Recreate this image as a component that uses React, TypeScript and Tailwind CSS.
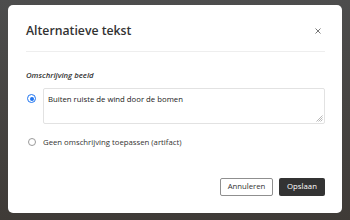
import React from 'react';

export default function App() {
  return (
    <div
      className="w-[350px] h-[220px] bg-gradient-to-b from-[#4d4d4d] to-[#3f3b37] pl-[8px] pt-[5px] overflow-hidden"
      style={{ fontFamily: '"Open Sans", sans-serif' }}
    >
      <div className="w-[334px] h-[208px] bg-white rounded-[5px] pl-[18px] pr-[17px] flex flex-col">
        {/* Header */}
        <div className="flex items-center justify-between h-[47px] border-b border-[#eeeeee]">
          <h2 className="text-[12.25px] font-semibold text-[#333333] leading-none pt-[6px]">
            Alternatieve tekst
          </h2>
          <button type="button" className="text-[#777777] leading-none mr-[4px] pt-[5px]" aria-label="Sluiten">
            <svg width="6" height="6" viewBox="0 0 6 6" stroke="currentColor" strokeWidth="1">
              <path d="M0.5 0.5 L5.5 5.5 M5.5 0.5 L0.5 5.5" />
            </svg>
          </button>
        </div>

        {/* Body */}
        <div className="pt-[20px]">
          <div className="text-[7.75px] italic font-semibold text-[#333333] leading-none">
            Omschrijving beeld
          </div>
          <div className="mt-[8px] flex items-start gap-[6px]">
            <div className="w-[11px] pt-[6.5px] flex justify-center">
              <span className="w-[9px] h-[9px] rounded-full border-[1.5px] border-[#1f74f0] bg-white flex items-center justify-center">
                <span className="w-[4px] h-[4px] rounded-full bg-[#1f74f0]" />
              </span>
            </div>
            <div className="relative flex-1 h-[36px] border border-[#e2e2e2] rounded-[2px] px-[4px] pt-[5px] text-[7.75px] leading-[11px] text-[#222222]">
              Buiten ruiste de wind door de bomen
              <svg className="absolute right-[1px] bottom-[1px]" width="7" height="7" viewBox="0 0 7 7" stroke="#999999" strokeWidth="0.7">
                <path d="M6.5 0.5 L0.5 6.5 M6.5 2.5 L2.5 6.5 M6.5 4.5 L4.5 6.5" />
              </svg>
            </div>
          </div>
          <div className="mt-[13px] flex items-center gap-[6px]">
            <div className="w-[11px] flex justify-center">
              <span className="w-[8px] h-[8px] rounded-full border border-[#9a9a9a] bg-white" />
            </div>
            <span className="text-[7.75px] leading-[11px] text-[#333333]">Geen omschrijving toepassen (artifact)</span>
          </div>
        </div>

        {/* Footer */}
        <div className="mt-auto mb-[17px] flex justify-end gap-[6px]">
          <button
            type="button"
            className="h-[18px] w-[53px] border border-[#8f8f8f] rounded-[2px] bg-white text-[7.75px] text-[#333333] leading-none"
          >
            Annuleren
          </button>
          <button
            type="button"
            className="h-[18px] w-[46px] rounded-[2px] bg-[#333333] text-[7.75px] text-white leading-none"
          >
            Opslaan
          </button>
        </div>
      </div>
    </div>
  );
}
